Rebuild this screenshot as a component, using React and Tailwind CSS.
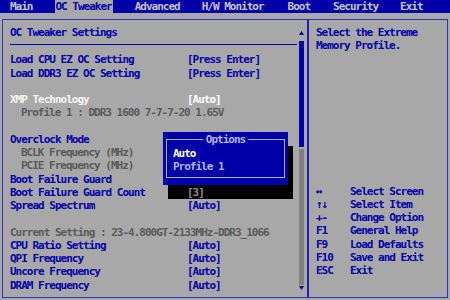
import React from 'react';

const menu = [
  { label: 'Main', ml: 'ml-[10px]' },
  { label: 'OC Tweaker', ml: 'ml-[22px]', active: true },
  { label: 'Advanced', ml: 'ml-[22px]' },
  { label: 'H/W Monitor', ml: 'ml-[22px]' },
  { label: 'Boot', ml: 'ml-[24px]' },
  { label: 'Security', ml: 'ml-[23px]' },
  { label: 'Exit', ml: 'ml-[22px]' },
];

const rows = [
  { label: 'Load CPU EZ OC Setting', value: '[Press Enter]' },
  { label: 'Load DDR3 EZ OC Setting', value: '[Press Enter]' },
  null,
  { label: 'XMP Technology', value: '[Auto]', tone: 'sel' },
  { label: 'Profile 1 : DDR3 1600 7-7-7-20 1.65V', tone: 'dim', indent: true },
  null,
  { label: 'Overclock Mode' },
  { label: 'BCLK Frequency (MHz)', tone: 'dim', indent: true },
  { label: 'PCIE Frequency (MHz)', tone: 'dim', indent: true },
  { label: 'Boot Failure Guard' },
  { label: 'Boot Failure Guard Count', value: '[3]', shaded: true },
  { label: 'Spread Spectrum', value: '[Auto]' },
  null,
  { label: 'Current Setting : 23-4.800GT-2133MHz-DDR3_1066', tone: 'dim' },
  { label: 'CPU Ratio Setting', value: '[Auto]' },
  { label: 'QPI Frequency', value: '[Auto]' },
  { label: 'Uncore Frequency', value: '[Auto]' },
  { label: 'DRAM Frequency', value: '[Auto]' },
];

const help = [
  ['↔', 'Select Screen'],
  ['↑↓', 'Select Item'],
  ['+-', 'Change Option'],
  ['F1', 'General Help'],
  ['F9', 'Load Defaults'],
  ['F10', 'Save and Exit'],
  ['ESC', 'Exit'],
];

function Row({ row }) {
  if (!row) return <div className="h-[13.25px]" />;
  const labelColor =
    row.tone === 'dim' ? 'text-[#5a5a5a]' : row.tone === 'sel' ? 'text-[#f4f4f4]' : 'text-[#0000a8]';
  return (
    <div className="flex h-[13.25px] items-center whitespace-pre">
      <span className={`${row.indent ? 'pl-[11px]' : ''} w-[177px] shrink-0 ${labelColor}`}>{row.label}</span>
      {row.value && (
        <span
          className={
            row.shaded
              ? 'relative z-10 text-[#8c8c8c]'
              : row.tone === 'sel'
              ? 'text-white'
              : 'text-[#0000a8]'
          }
        >
          {row.value}
        </span>
      )}
    </div>
  );
}

export default function App() {
  return (
    <div className="relative w-[450px] h-[300px] overflow-hidden bg-[#a8a8a8] font-['DejaVu_Sans_Mono',monospace] text-[11px] font-bold tracking-[-1px] leading-[13.25px]">
      {/* Top menu */}
      <div className="flex h-[13px] items-center bg-[#0000a8] text-[#c4c4c4]">
        {menu.map(m => (
          <span
            key={m.label}
            className={`${m.ml} h-full flex items-center ${m.active ? 'bg-[#a8a8a8] text-[#0000a8] px-[1px]' : ''}`}
          >
            {m.label}
          </span>
        ))}
      </div>

      {/* Frame */}
      <div className="mt-[6px] ml-[2px] flex w-[446px] h-[279px] border border-[#3030b8]">
        {/* Left panel */}
        <div className="flex w-[303px] shrink-0">
          <div className="w-[296px] shrink-0 pl-[7px] pt-[6px]">
            <div className="text-[#0000a8]">OC Tweaker Settings</div>
            <div className="mt-[5px] mr-[2px] h-px bg-[#0000a8]" />
            <div className="mt-[8px]">
              {rows.map((r, i) => (
                <Row key={i} row={r} />
              ))}
            </div>
          </div>
          {/* Scrollbar */}
          <div className="flex w-[5px] flex-col items-center pt-[11px] pb-[7px]">
            <svg width="5" height="4" viewBox="0 0 5 4">
              <polygon points="2.5,0 5,4 0,4" fill="#0000a8" />
            </svg>
            <div className="mt-[6px] h-[106px] w-full bg-[#0000a8]" />
            <div className="mt-[2px] w-full flex-1 bg-[#808080]" />
            <svg className="mt-[1px]" width="5" height="4" viewBox="0 0 5 4">
              <polygon points="0,0 5,0 2.5,4" fill="#0000a8" />
            </svg>
          </div>
        </div>

        {/* Right help panel */}
        <div className="ml-[1px] flex-1 border-l-2 border-[#2020b0] pl-[7px] pt-[6px] text-[#0000a8]">
          <div>Select the Extreme</div>
          <div>Memory Profile.</div>
          <div className="mt-[132px]">
            {help.map(([k, d]) => (
              <div key={d} className="flex h-[13.25px] items-center whitespace-pre">
                <span className="w-[34px] shrink-0">{k}</span>
                <span>{d}</span>
              </div>
            ))}
          </div>
        </div>
      </div>

      {/* Options popup shadow */}
      <div className="absolute left-[168px] top-[146px] w-[125px] h-[53px] bg-black" />
      {/* Options popup */}
      <div className="absolute z-20 left-[163px] top-[132px] w-[125px] h-[53px] bg-[#0000a8] px-[3px] pt-[7px] pb-[7px]">
        <div className="relative h-full border border-[#b0b0c8] pl-[6px] pt-[7px]">
          <span className="absolute left-1/2 top-[-7px] -translate-x-1/2 bg-[#0000a8] px-[3px] text-[#b4b4e4]">
            Options
          </span>
          <div className="text-white">Auto</div>
          <div className="text-[#b4b4e4]">Profile 1</div>
        </div>
      </div>
    </div>
  );
}
